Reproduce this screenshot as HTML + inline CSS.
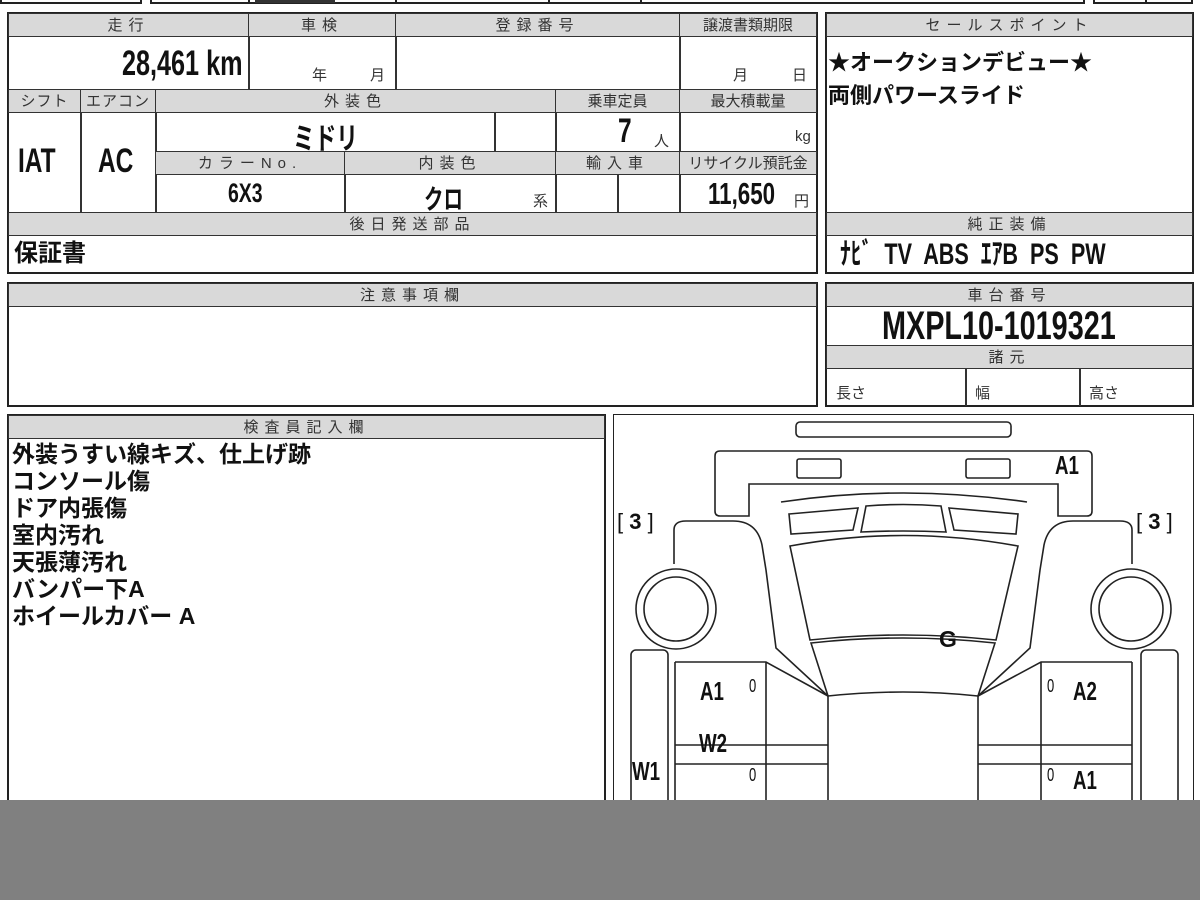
<!DOCTYPE html>
<html><head><meta charset="utf-8"><style>
*{margin:0;padding:0;box-sizing:border-box}
body{width:1200px;height:900px;background:#fff;position:relative;overflow:hidden;font-family:"Liberation Sans","Noto Sans CJK JP",sans-serif;color:#111}
.a{position:absolute}
.bx{position:absolute;border:2px solid #222}
.h{position:absolute;background:#d9d9d9;border:1px solid #333;font-size:15px;text-align:center;line-height:23px;letter-spacing:6px;color:#333}
.c{position:absolute;border:1px solid #333}
.v{position:absolute;font-weight:bold;white-space:nowrap;font-family:"Liberation Sans","Noto Sans CJK JP",sans-serif}
.n{display:inline-block;transform:scaleX(.72);transform-origin:left center}
.s{font-size:15px;color:#333;position:absolute}
</style></head><body>
<!-- top strip -->
<div class="a" style="left:0;top:-4px;width:142px;height:8px;border:2px solid #222;border-top:none"></div>
<div class="a" style="left:150px;top:-4px;width:935px;height:8px;border:2px solid #222;border-top:none"></div>
<div class="a" style="left:248px;top:0;width:2px;height:4px;background:#222"></div>
<div class="a" style="left:395px;top:0;width:2px;height:4px;background:#222"></div>
<div class="a" style="left:548px;top:0;width:2px;height:4px;background:#222"></div>
<div class="a" style="left:640px;top:0;width:2px;height:4px;background:#222"></div>
<div class="a" style="left:255px;top:0;width:80px;height:3px;background:#333"></div>
<div class="a" style="left:1093px;top:-4px;width:100px;height:8px;border:2px solid #222;border-top:none"></div>
<div class="a" style="left:1145px;top:0;width:2px;height:4px;background:#222"></div>

<!-- main table -->
<div class="bx" style="left:7px;top:12px;width:811px;height:262px"></div>
<div class="h" style="left:8px;top:13px;width:241px;height:24px">走行</div>
<div class="h" style="left:248px;top:13px;width:148px;height:24px">車検</div>
<div class="h" style="left:395px;top:13px;width:285px;height:24px">登録番号</div>
<div class="h" style="left:679px;top:13px;width:138px;height:24px;letter-spacing:0">譲渡書類期限</div>
<div class="c" style="left:248px;top:37px;width:1px;height:52px"></div>
<div class="c" style="left:395px;top:37px;width:1px;height:52px"></div>
<div class="c" style="left:679px;top:37px;width:1px;height:52px"></div>
<div class="v" style="left:122px;top:44px;font-size:35px;line-height:40px"><span class="n">28,461 km</span></div>
<div class="s" style="left:312px;top:64px">年</div><div class="s" style="left:370px;top:64px">月</div>
<div class="s" style="left:733px;top:64px">月</div><div class="s" style="left:792px;top:64px">日</div>

<div class="h" style="left:8px;top:89px;width:73px;height:24px;letter-spacing:1px">シフト</div>
<div class="h" style="left:80px;top:89px;width:76px;height:24px;letter-spacing:1px">エアコン</div>
<div class="h" style="left:155px;top:89px;width:401px;height:24px">外装色</div>
<div class="h" style="left:555px;top:89px;width:125px;height:24px;letter-spacing:0">乗車定員</div>
<div class="h" style="left:679px;top:89px;width:138px;height:24px;letter-spacing:0">最大積載量</div>
<div class="c" style="left:80px;top:113px;width:1px;height:99px"></div>
<div class="c" style="left:155px;top:113px;width:1px;height:99px"></div>
<div class="c" style="left:494px;top:113px;width:1px;height:38px"></div>
<div class="c" style="left:555px;top:113px;width:1px;height:99px"></div>
<div class="c" style="left:679px;top:113px;width:1px;height:99px"></div>
<div class="v" style="left:18px;top:142px;font-size:34px"><span class="n">IAT</span></div>
<div class="v" style="left:98px;top:142px;font-size:34px"><span class="n">AC</span></div>
<div class="v" style="left:293px;top:114px;font-size:30px"><span class="n">ミドリ</span></div>
<div class="v" style="left:618px;top:112px;font-size:34px"><span class="n">7</span></div>
<div class="s" style="left:654px;top:130px">人</div>
<div class="s" style="left:795px;top:128px">kg</div>
<div class="h" style="left:155px;top:151px;width:190px;height:24px">カラーNo.</div>
<div class="h" style="left:344px;top:151px;width:212px;height:24px">内装色</div>
<div class="h" style="left:555px;top:151px;width:125px;height:24px">輸入車</div>
<div class="h" style="left:679px;top:151px;width:138px;height:24px;letter-spacing:0">リサイクル預託金</div>
<div class="c" style="left:344px;top:175px;width:1px;height:37px"></div>
<div class="c" style="left:617px;top:175px;width:1px;height:37px"></div>
<div class="v" style="left:228px;top:178px;font-size:27px"><span class="n">6X3</span></div>
<div class="v" style="left:424px;top:178px;font-size:27px"><span class="n">クロ</span></div>
<div class="s" style="left:533px;top:190px">系</div>
<div class="v" style="left:708px;top:176px;font-size:31px"><span class="n">11,650</span></div>
<div class="s" style="left:794px;top:190px">円</div>
<div class="h" style="left:8px;top:212px;width:809px;height:24px">後日発送部品</div>
<div class="v" style="left:14px;top:238px;font-size:24px;line-height:32px">保証書</div>

<!-- sales point -->
<div class="bx" style="left:825px;top:12px;width:369px;height:262px"></div>
<div class="h" style="left:826px;top:13px;width:367px;height:24px">セールスポイント</div>
<div class="v" style="left:828px;top:45px;font-size:22px">★オークションデビュー★</div>
<div class="v" style="left:828px;top:78px;font-size:22px">両側パワースライド</div>
<div class="h" style="left:826px;top:212px;width:367px;height:24px">純正装備</div>
<div class="v" style="left:840px;top:237px;font-size:30px;line-height:36px;white-space:pre"><span class="n">ﾅﾋﾞ  TV  ABS  ｴｱB  PS  PW</span></div>

<!-- notes -->
<div class="bx" style="left:7px;top:282px;width:811px;height:125px"></div>
<div class="h" style="left:8px;top:283px;width:809px;height:24px">注意事項欄</div>

<div class="bx" style="left:825px;top:282px;width:369px;height:125px"></div>
<div class="h" style="left:826px;top:283px;width:367px;height:24px">車台番号</div>
<div class="v" style="left:882px;top:304px;font-size:40px;line-height:44px"><span class="n">MXPL10-1019321</span></div>
<div class="h" style="left:826px;top:345px;width:367px;height:24px">諸元</div>
<div class="c" style="left:965px;top:369px;width:1px;height:37px"></div>
<div class="c" style="left:1079px;top:369px;width:1px;height:37px"></div>
<div class="s" style="left:836px;top:382px">長さ</div>
<div class="s" style="left:975px;top:382px">幅</div>
<div class="s" style="left:1089px;top:382px">高さ</div>

<!-- inspector -->
<div class="bx" style="left:7px;top:414px;width:599px;height:420px"></div>
<div class="h" style="left:8px;top:415px;width:597px;height:24px">検査員記入欄</div>
<div class="v" style="left:12px;top:441px;font-size:23px;line-height:27px">外装うすい線キズ、仕上げ跡<br>コンソール傷<br>ドア内張傷<br>室内汚れ<br>天張薄汚れ<br>バンパー下A<br>ホイールカバー A</div>

<!-- diagram -->
<div class="bx" style="left:613px;top:414px;width:581px;height:420px;border-width:1px"></div>
<svg class="a" style="left:0;top:0" width="1200" height="900" viewBox="0 0 1200 900" fill="none" stroke="#222" stroke-width="1.6">
<rect x="796" y="422" width="215" height="15" rx="4"/>
<path d="M720 451H1087Q1092 451 1092 456V511Q1092 516 1087 516H1058V484H749V516H720Q715 516 715 511V456Q715 451 720 451Z"/>
<rect x="797" y="459" width="44" height="19" rx="2"/>
<rect x="966" y="459" width="44" height="19" rx="2"/>
<path d="M781 502Q903 484 1027 502"/>
<path d="M789 514L858 508L853 530L791 534Z"/>
<path d="M949 508L1018 514L1016 534L954 530Z"/>
<path d="M866 506Q903 503 941 506L946 532Q903 530 861 532Z"/>
<path d="M790 546Q903 525 1018 546L996 640Q903 630 810 640Z"/>
<path d="M811 643Q903 633 995 643L978 696Q903 688 828 696Z"/>
<path d="M674 564V530Q674 521 686 521H733Q757 521 762 545L766 570L776 648L828 696"/>
<path d="M1132 564V530Q1132 521 1120 521H1073Q1049 521 1044 545L1040 570L1030 648L978 696"/>
<circle cx="676" cy="609" r="40"/><circle cx="676" cy="609" r="32"/>
<circle cx="1131" cy="609" r="40"/><circle cx="1131" cy="609" r="32"/>
<rect x="631" y="650" width="37" height="193" rx="5"/>
<rect x="1141" y="650" width="37" height="193" rx="5"/>
<path d="M675 662H766L828 696M675 662V820M766 662V820M675 745H828M675 764H828"/>
<path d="M1132 662H1041L978 696M1132 662V820M1041 662V820M1132 745H978M1132 764H978"/>
<path d="M828 696V808M978 696V808M828 808Q903 800 978 808M828 808L766 840M978 808L1041 840"/>
</svg>
<div class="v" style="left:1055px;top:450px;font-size:26px"><span class="n">A1</span></div>
<div class="v a" style="left:617px;top:509px;font-size:22px;font-weight:normal">[ <b>3</b> ]</div>
<div class="v a" style="left:1136px;top:509px;font-size:22px;font-weight:normal">[ <b>3</b> ]</div>
<div class="v" style="left:939px;top:626px;font-size:23px">G</div>
<div class="v" style="left:700px;top:676px;font-size:26px"><span class="n">A1</span></div>
<div class="v" style="left:749px;top:676px;font-size:18px;font-weight:normal"><span class="n">0</span></div>
<div class="v" style="left:1047px;top:676px;font-size:18px;font-weight:normal"><span class="n">0</span></div>
<div class="v" style="left:1073px;top:676px;font-size:26px"><span class="n">A2</span></div>
<div class="v" style="left:699px;top:728px;font-size:26px"><span class="n">W2</span></div>
<div class="v" style="left:632px;top:756px;font-size:26px"><span class="n">W1</span></div>
<div class="v" style="left:749px;top:765px;font-size:18px;font-weight:normal"><span class="n">0</span></div>
<div class="v" style="left:1047px;top:765px;font-size:18px;font-weight:normal"><span class="n">0</span></div>
<div class="v" style="left:1073px;top:765px;font-size:26px"><span class="n">A1</span></div>

<!-- gray band -->
<div class="a" style="left:0;top:800px;width:1200px;height:100px;background:#808080"></div>
</body></html>
